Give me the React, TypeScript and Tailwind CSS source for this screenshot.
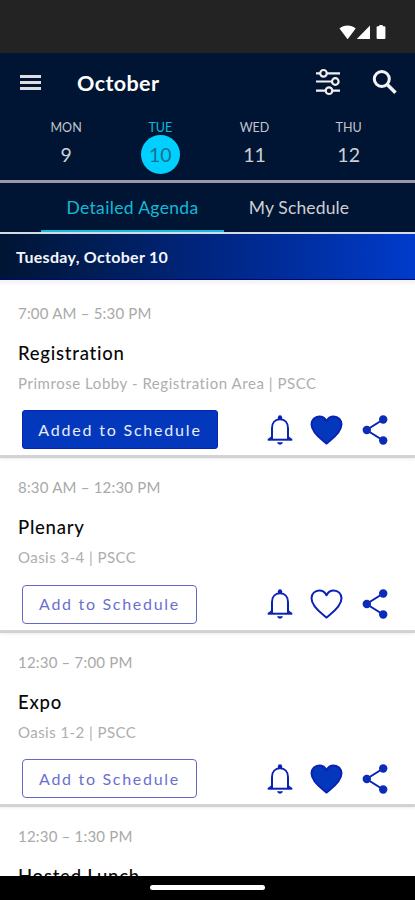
import React, { useState } from 'react';

interface Day {
  name: string;
  date: number;
}

interface Session {
  id: number;
  time: string;
  title: string;
  location?: string;
  locationClass?: string;
  added: boolean;
  liked: boolean;
}

const days: Day[] = [
  { name: 'MON', date: 9 },
  { name: 'TUE', date: 10 },
  { name: 'WED', date: 11 },
  { name: 'THU', date: 12 },
];

const initialSessions: Session[] = [
  {
    id: 1,
    time: '7:00 AM – 5:30 PM',
    title: 'Registration',
    location: 'Primrose Lobby - Registration Area | PSCC',
    locationClass: 'tracking-[0.55px]',
    added: true,
    liked: true,
  },
  {
    id: 2,
    time: '8:30 AM – 12:30 PM',
    title: 'Plenary',
    location: 'Oasis 3-4 | PSCC',
    locationClass: 'tracking-[0.45px]',
    added: false,
    liked: false,
  },
  {
    id: 3,
    time: '12:30 – 7:00 PM',
    title: 'Expo',
    location: 'Oasis 1-2 | PSCC',
    locationClass: 'tracking-[0.45px]',
    added: false,
    liked: true,
  },
  {
    id: 4,
    time: '12:30 – 1:30 PM',
    title: 'Hosted Lunch',
    added: false,
    liked: false,
  },
];

const StatusBar: React.FC = () => (
  <div className="flex h-[53px] shrink-0 justify-end bg-[#232323] pt-[24px] pr-[27px]">
    <svg width="50" height="16" viewBox="0 0 50 16" fill="#fff">
      <path d="M1.500 4.600C5.500.4 13.500.4 17.700 4.600L9.600 15.200Z" />
      <path d="M32 1.500V15H18.800Z" />
      <path d="M41.300 1h3.400v1.300h1.700q1 0 1 1v10.700q0 1-1 1h-6.800q-1 0-1-1V3.300q0-1 1-1h1.700z" />
    </svg>
  </div>
);

const FilterIcon: React.FC = () => (
  <svg width="26" height="28" viewBox="0 0 26 28" fill="none" stroke="#f2efef" strokeWidth="2.200">
    <path d="M1 5.300h4M12 5.300h13M1 13.500h15.500M1 22.700h9.500M17.500 22.700H25" />
    <circle cx="8.500" cy="5.300" r="3.300" />
    <circle cx="20.300" cy="13.500" r="3.300" />
    <circle cx="14" cy="22.700" r="3.300" />
  </svg>
);

const BellIcon: React.FC = () => (
  <svg width="26" height="30" viewBox="0 0 26 30" fill="none" stroke="#0a22b4" strokeWidth="2">
    <path d="M5 24.500V13.200C5 7.500 8.300 4.300 13 4.300s8 3.200 8 8.900v11.300" />
    <path d="m1.500 24.700 3-2.500M24.500 24.700l-3-2.500" strokeWidth="1.500" />
    <path d="M.700 24.700h24.600" />
    <path d="M10.900 4.500V2.300a2.100 2.100 0 0 1 4.200 0v2.200z" fill="#0a22b4" stroke="none" />
    <path d="M10 27.300h6q-.500 2.400-3 2.400t-3-2.400z" fill="#0a22b4" stroke="none" />
  </svg>
);

const HeartIcon: React.FC<{ filled: boolean }> = ({ filled }) => (
  <svg width="33" height="30" viewBox="0 0 33 30" stroke="#0a22b4" strokeWidth="2" strokeLinejoin="round">
    <path
      d="M16.500 28.600C13.500 25.600 1.500 18.500 1.500 9.300 1.500 4.700 5 1.400 9.200 1.400c3.200 0 5.900 1.800 7.300 4.900 1.400-3.100 4.100-4.900 7.300-4.900 4.200 0 7.700 3.300 7.700 7.900 0 9.200-12 16.300-15 19.300z"
      fill={filled ? '#0338bd' : 'none'}
    />
  </svg>
);

const ShareIcon: React.FC = () => (
  <svg width="26" height="30" viewBox="0 0 26 30" fill="#0a2cb8">
    <path d="M21.200 4.500 4.500 15l16.700 10.500" fill="none" stroke="#0a22b4" strokeWidth="2" />
    <circle cx="21.200" cy="4.500" r="4.200" />
    <circle cx="4.800" cy="15" r="4.200" />
    <circle cx="21.200" cy="25.500" r="4.200" />
  </svg>
);

interface SessionCardProps {
  session: Session;
  onToggleAdded: () => void;
  onToggleLiked: () => void;
}

const SessionCard: React.FC<SessionCardProps> = ({ session, onToggleAdded, onToggleLiked }) => (
  <li className="h-[174.5px] shrink-0 border-b-[3px] border-[#d3d3d8] px-[18px] pt-[19px] whitespace-nowrap shadow-[0_1px_3px_rgba(0,0,0,0.08)]">
    <p className="h-[20px] text-[15px] leading-[20px] tracking-[0.2px] text-[#a9a9a9]">{session.time}</p>
    <h2 className="mt-[18px] h-[24px] text-[18.500px] leading-[24px] font-medium tracking-[0.75px] text-[#080808]">
      {session.title}
    </h2>
    {session.location && (
      <>
        <p className={`mt-[8px] h-[20px] text-[15px] leading-[20px] text-[#aeaeae] ${session.locationClass}`}>
          {session.location}
        </p>
        <div className="mt-[17.500px] flex h-[39px] items-center pl-[4px]">
          {session.added ? (
            <button
              onClick={onToggleAdded}
              className="h-[39px] w-[196px] rounded-[3px] border border-[#0a22b4] bg-[#0338bd] text-[16px] tracking-[1.8px] text-[#e8ecfa]"
            >
              Added to Schedule
            </button>
          ) : (
            <button
              onClick={onToggleAdded}
              className="h-[39px] w-[175px] rounded-[4px] border border-[#6668c8] text-[16px] tracking-[1.7px] text-[#6970d0]"
            >
              Add to Schedule
            </button>
          )}
          <div className="mr-[9px] ml-auto flex items-center">
            <button aria-label="Set reminder">
              <BellIcon />
            </button>
            <button className="ml-[17px]" aria-label="Favorite" aria-pressed={session.liked} onClick={onToggleLiked}>
              <HeartIcon filled={session.liked} />
            </button>
            <button className="ml-[19px]" aria-label="Share">
              <ShareIcon />
            </button>
          </div>
        </div>
      </>
    )}
  </li>
);

export default function App() {
  const [selected, setSelected] = useState(10);
  const [tab, setTab] = useState('agenda');
  const [sessions, setSessions] = useState(initialSessions);

  const toggle = (id: number, key: 'added' | 'liked') => {
    setSessions(sessions.map((s) => (s.id === id ? { ...s, [key]: !s[key] } : s)));
  };

  return (
    <div className="flex h-[900px] w-[415px] flex-col overflow-hidden bg-white font-[Lato,sans-serif]">
      <StatusBar />

      {/* Month header and day picker */}
      <header className="flex h-[127px] shrink-0 flex-col bg-[#001534]">
        <div className="flex h-[58px] items-center pr-[18px] pl-[20px]">
          <button className="flex w-[21px] flex-col gap-[3px]" aria-label="Menu">
            <span className="h-[3px] w-full bg-[#dedede]" />
            <span className="h-[3px] w-full bg-[#dedede]" />
            <span className="h-[3px] w-full bg-[#dedede]" />
          </button>
          <h1 className="ml-[36px] pt-[2px] text-[21.500px] leading-[28px] font-bold tracking-[0.4px] text-white">
            October
          </h1>
          <button className="mr-[31px] ml-auto" aria-label="Filter">
            <FilterIcon />
          </button>
          <button aria-label="Search">
            <svg width="25" height="26" viewBox="0 0 25 26" fill="none" stroke="#f4f4f4" strokeWidth="3">
              <circle cx="9.800" cy="10" r="7.500" />
              <path d="m15.200 15.500 8.300 8.300" strokeWidth="3.500" />
            </svg>
          </button>
        </div>
        <div className="flex pt-[2px] pl-[19px]">
          {days.map((day) => (
            <button key={day.date} onClick={() => setSelected(day.date)} className="flex w-[94.200px] flex-col items-center">
              <span
                className={`mt-[7px] h-[15px] text-[12.500px] leading-[16px] ${
                  day.date === selected ? 'text-[#06bfdc]' : 'text-[#c3c5ca]'
                }`}
              >
                {day.name}
              </span>
              <span
                className={`flex h-[39px] w-[39px] items-center justify-center rounded-full pt-px text-[19.500px] ${
                  day.date === selected ? 'bg-[#00d0ff] text-[#17708e]' : 'text-[#cfd0d4]'
                }`}
              >
                {day.date}
              </span>
            </button>
          ))}
        </div>
      </header>

      {/* Tabs */}
      <nav className="flex h-[54px] shrink-0 border-t-[3px] border-b-[2px] border-t-[#9d98a5] border-b-[#d5dbe4] bg-[#001534] pl-[41px] text-[17.500px] whitespace-nowrap">
        <button
          onClick={() => setTab('agenda')}
          className={`w-[183px] border-b-[2px] pt-[4px] tracking-[0.35px] ${
            tab === 'agenda' ? 'border-[#18bbdb] text-[#12bad6]' : 'border-transparent text-[#cfcfd2]'
          }`}
        >
          Detailed Agenda
        </button>
        <button
          onClick={() => setTab('schedule')}
          className={`w-[150px] border-b-[2px] pt-[4px] tracking-[0.15px] ${
            tab === 'schedule' ? 'border-[#18bbdb] text-[#12bad6]' : 'border-transparent text-[#cfcfd2]'
          }`}
        >
          My Schedule
        </button>
      </nav>

      <div className="flex h-[46px] shrink-0 items-center border-b border-[#000a70] bg-linear-to-r from-[#001534] via-[#002580] to-[#003bcc] pl-[16px] text-[16px] font-bold tracking-[0.3px] text-[#f4f6fb]">
        Tuesday, October 10
      </div>

      <ul className="flex min-h-0 flex-1 flex-col overflow-hidden bg-linear-to-b from-[#f2f2f7] to-white to-[6px] pt-[3.500px]">
        {sessions.map((session) => (
          <SessionCard
            key={session.id}
            session={session}
            onToggleAdded={() => toggle(session.id, 'added')}
            onToggleLiked={() => toggle(session.id, 'liked')}
          />
        ))}
      </ul>

      {/* Gesture bar */}
      <footer className="flex h-[24px] shrink-0 justify-center bg-black pt-[9px]">
        <div className="h-[5px] w-[115px] rounded-full bg-white" />
      </footer>
    </div>
  );
}
